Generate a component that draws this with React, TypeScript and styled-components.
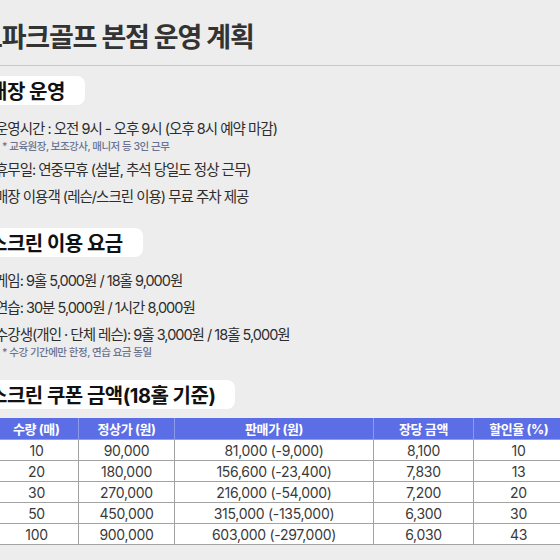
import React from "react";
import styled, { createGlobalStyle } from "styled-components";

const GlobalStyle = createGlobalStyle`
  html, body {
    margin: 0;
    padding: 0;
    background: #ededed;
    overflow: hidden;
  }
  body {
    font-family: Inter, "Noto Sans CJK KR", "Noto Sans", sans-serif;
    color: #333;
  }
`;

const Page = styled.div`
  width: 600px;
  margin-left: -26px;
`;

const Header = styled.header`
  height: 65px;
  display: flex;
  align-items: flex-end;
  padding-left: 4px;
  border-bottom: 1px solid #c9c9c9;
  margin-right: -40px;
`;

const Title = styled.h1`
  margin: 0 0 11px;
  font-size: 27px;
  line-height: 32px;
  font-weight: 700;
  letter-spacing: -1.2px;
  color: #333;
`;

const Content = styled.main`
  display: flex;
  flex-direction: column;
  gap: 20px;
  padding-top: 10px;
`;

const Section = styled.section`
  display: flex;
  flex-direction: column;
`;

const Pill = styled.h2`
  align-self: flex-start;
  margin: 0;
  height: 29px;
  display: flex;
  align-items: center;
  padding: 0 20px 0 15px;
  background: #fff;
  border-radius: 8px;
  font-size: 20px;
  font-weight: 700;
  letter-spacing: -0.5px;
  color: #111;
`;

const List = styled.ul`
  list-style: none;
  margin: 13px 0 0;
  padding: 0 0 0 21px;
  display: flex;
  flex-direction: column;
  gap: 5px;
`;

const Item = styled.li`
  display: flex;
  flex-direction: column;
`;

const Line = styled.span`
  font-size: 14.5px;
  line-height: 22px;
  letter-spacing: -1px;
  color: #2e2e2e;
`;

const Note = styled.span`
  padding-left: 7px;
  font-size: 10.5px;
  line-height: 14px;
  font-weight: 500;
  letter-spacing: -0.5px;
  color: #6b7390;
`;

const Table = styled.table`
  margin: 9px 0 0 20px;
  border-collapse: collapse;
  table-layout: fixed;
  width: 569px;
  background: #fff;
`;

const Th = styled.th`
  height: 21px;
  padding: 0;
  background: #5b6ee6;
  color: #fff;
  font-size: 13px;
  font-weight: 700;
  letter-spacing: -0.4px;
  text-align: center;
  border-left: 1px solid #8d99ea;
  &:first-child {
    border-left: none;
  }
`;

const Td = styled.td`
  height: 20px;
  padding: 0;
  font-size: 14px;
  color: #3a3a3a;
  letter-spacing: -0.3px;
  text-align: center;
  border: 1px solid #a3a3a3;
`;

const columns = [
  { label: "수량 (매)", width: 84 },
  { label: "정상가 (원)", width: 96 },
  { label: "판매가 (원)", width: 199 },
  { label: "장당 금액", width: 100 },
  { label: "할인율 (%)", width: 90 },
];

const coupons = [
  ["10", "90,000", "81,000 (-9,000)", "8,100", "10"],
  ["20", "180,000", "156,600 (-23,400)", "7,830", "13"],
  ["30", "270,000", "216,000 (-54,000)", "7,200", "20"],
  ["50", "450,000", "315,000 (-135,000)", "6,300", "30"],
  ["100", "900,000", "603,000 (-297,000)", "6,030", "43"],
];

const App: React.FC = () => (
  <>
    <GlobalStyle />
    <Page>
      <Header>
        <Title>트파크골프 본점 운영 계획</Title>
      </Header>
      <Content>
        <Section>
          <Pill>매장 운영</Pill>
          <List>
            <Item>
              <Line>운영시간 : 오전 9시 - 오후 9시 (오후 8시 예약 마감)</Line>
              <Note>* 교육원장, 보조강사, 매니저 등 3인 근무</Note>
            </Item>
            <Item>
              <Line>휴무일: 연중무휴 (설날, 추석 당일도 정상 근무)</Line>
            </Item>
            <Item>
              <Line>매장 이용객 (레슨/스크린 이용) 무료 주차 제공</Line>
            </Item>
          </List>
        </Section>
        <Section>
          <Pill>스크린 이용 요금</Pill>
          <List>
            <Item>
              <Line>게임: 9홀 5,000원 / 18홀 9,000원</Line>
            </Item>
            <Item>
              <Line>연습: 30분 5,000원 / 1시간 8,000원</Line>
            </Item>
            <Item>
              <Line>수강생(개인 · 단체 레슨): 9홀 3,000원 / 18홀 5,000원</Line>
              <Note>* 수강 기간에만 한정, 연습 요금 동일</Note>
            </Item>
          </List>
        </Section>
        <Section>
          <Pill>스크린 쿠폰 금액(18홀 기준)</Pill>
          <Table>
            <colgroup>
              {columns.map((c) => (
                <col key={c.label} style={{ width: c.width }} />
              ))}
            </colgroup>
            <thead>
              <tr>
                {columns.map((c) => (
                  <Th key={c.label}>{c.label}</Th>
                ))}
              </tr>
            </thead>
            <tbody>
              {coupons.map((row) => (
                <tr key={row[0]}>
                  {row.map((cell, i) => (
                    <Td key={i}>{cell}</Td>
                  ))}
                </tr>
              ))}
            </tbody>
          </Table>
        </Section>
      </Content>
    </Page>
  </>
);

export default App;
